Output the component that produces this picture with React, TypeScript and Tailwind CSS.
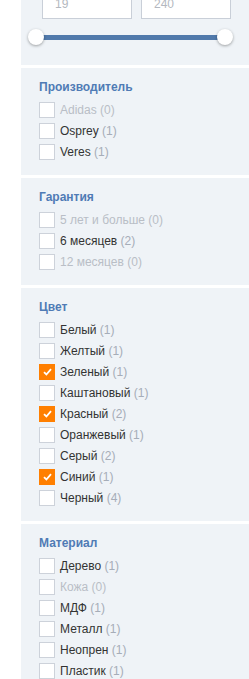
import React from "react";

type Item = { label: string; count: number; checked?: boolean };

const groups: { title: string; items: Item[] }[] = [
  {
    title: "Производитель",
    items: [
      { label: "Adidas", count: 0 },
      { label: "Osprey", count: 1 },
      { label: "Veres", count: 1 },
    ],
  },
  {
    title: "Гарантия",
    items: [
      { label: "5 лет и больше", count: 0 },
      { label: "6 месяцев", count: 2 },
      { label: "12 месяцев", count: 0 },
    ],
  },
  {
    title: "Цвет",
    items: [
      { label: "Белый", count: 1 },
      { label: "Желтый", count: 1 },
      { label: "Зеленый", count: 1, checked: true },
      { label: "Каштановый", count: 1 },
      { label: "Красный", count: 2, checked: true },
      { label: "Оранжевый", count: 1 },
      { label: "Серый", count: 2 },
      { label: "Синий", count: 1, checked: true },
      { label: "Черный", count: 4 },
    ],
  },
  {
    title: "Материал",
    items: [
      { label: "Дерево", count: 1 },
      { label: "Кожа", count: 0 },
      { label: "МДФ", count: 1 },
      { label: "Металл", count: 1 },
      { label: "Неопрен", count: 1 },
      { label: "Пластик", count: 1 },
    ],
  },
];

function Checkbox({ checked }: { checked?: boolean }) {
  if (checked) {
    return (
      <span className="w-4 h-4 shrink-0 bg-[#ff7f00] flex items-center justify-center">
        <svg width="9" height="8" viewBox="0 0 9 8" aria-hidden="true">
          <path d="M1 4.2 L3.4 6.5 L8 1.2" fill="none" stroke="#fff" strokeWidth="1.8" />
        </svg>
      </span>
    );
  }
  return <span className="w-4 h-4 shrink-0 bg-white border border-[#cdd2da]" />;
}

function FilterRow({ item }: { item: Item }) {
  const disabled = item.count === 0;
  return (
    <div className="flex items-center h-4 gap-[5px]">
      <Checkbox checked={item.checked} />
      <span className="text-[12px] leading-4 whitespace-nowrap">
        <span className={disabled ? "text-[#b9bec6]" : "text-[#333333]"}>{item.label}</span>
        <span className={disabled ? "text-[#b9bec6]" : "text-[#a6adb8]"}> ({item.count})</span>
      </span>
    </div>
  );
}

function PriceBlock() {
  return (
    <div className="ml-[21px] bg-[#eff3f7] -mt-[12px] pb-[20px]">
      <div className="flex gap-[9px] pl-[21px]">
        <div className="w-[90px] h-[31px] bg-white border border-[#c9cfd8] flex items-center pl-3 text-[12px] text-[#b3b8c0]">
          19
        </div>
        <div className="w-[90px] h-[31px] bg-white border border-[#c9cfd8] flex items-center pl-3 text-[12px] text-[#b3b8c0]">
          240
        </div>
      </div>
      <div className="relative ml-[7px] mt-[10px] w-[205px] h-4">
        <div className="absolute left-2 right-2 top-[6px] h-[5px] bg-[#5079ab]" />
        <span className="absolute left-0 top-0 w-4 h-4 rounded-full bg-white shadow-[0_1px_3px_rgba(0,0,0,0.35)]" />
        <span className="absolute right-0 top-0 w-4 h-4 rounded-full bg-white shadow-[0_1px_3px_rgba(0,0,0,0.35)]" />
      </div>
    </div>
  );
}

export default function App() {
  return (
    <div className="w-[249px] h-[679px] overflow-hidden bg-white font-['Liberation_Sans',Arial,sans-serif]">
      <PriceBlock />
      {groups.map((g) => (
        <div key={g.title} className="ml-[21px] mt-[3px] bg-[#eff3f7] pl-[18px] pt-3 pb-[15px]">
          <div className="text-[12px] leading-[14px] font-bold text-[#4f7bb5] mb-2">{g.title}</div>
          <div className="flex flex-col gap-[5px]">
            {g.items.map((it) => (
              <FilterRow key={it.label} item={it} />
            ))}
          </div>
        </div>
      ))}
    </div>
  );
}
